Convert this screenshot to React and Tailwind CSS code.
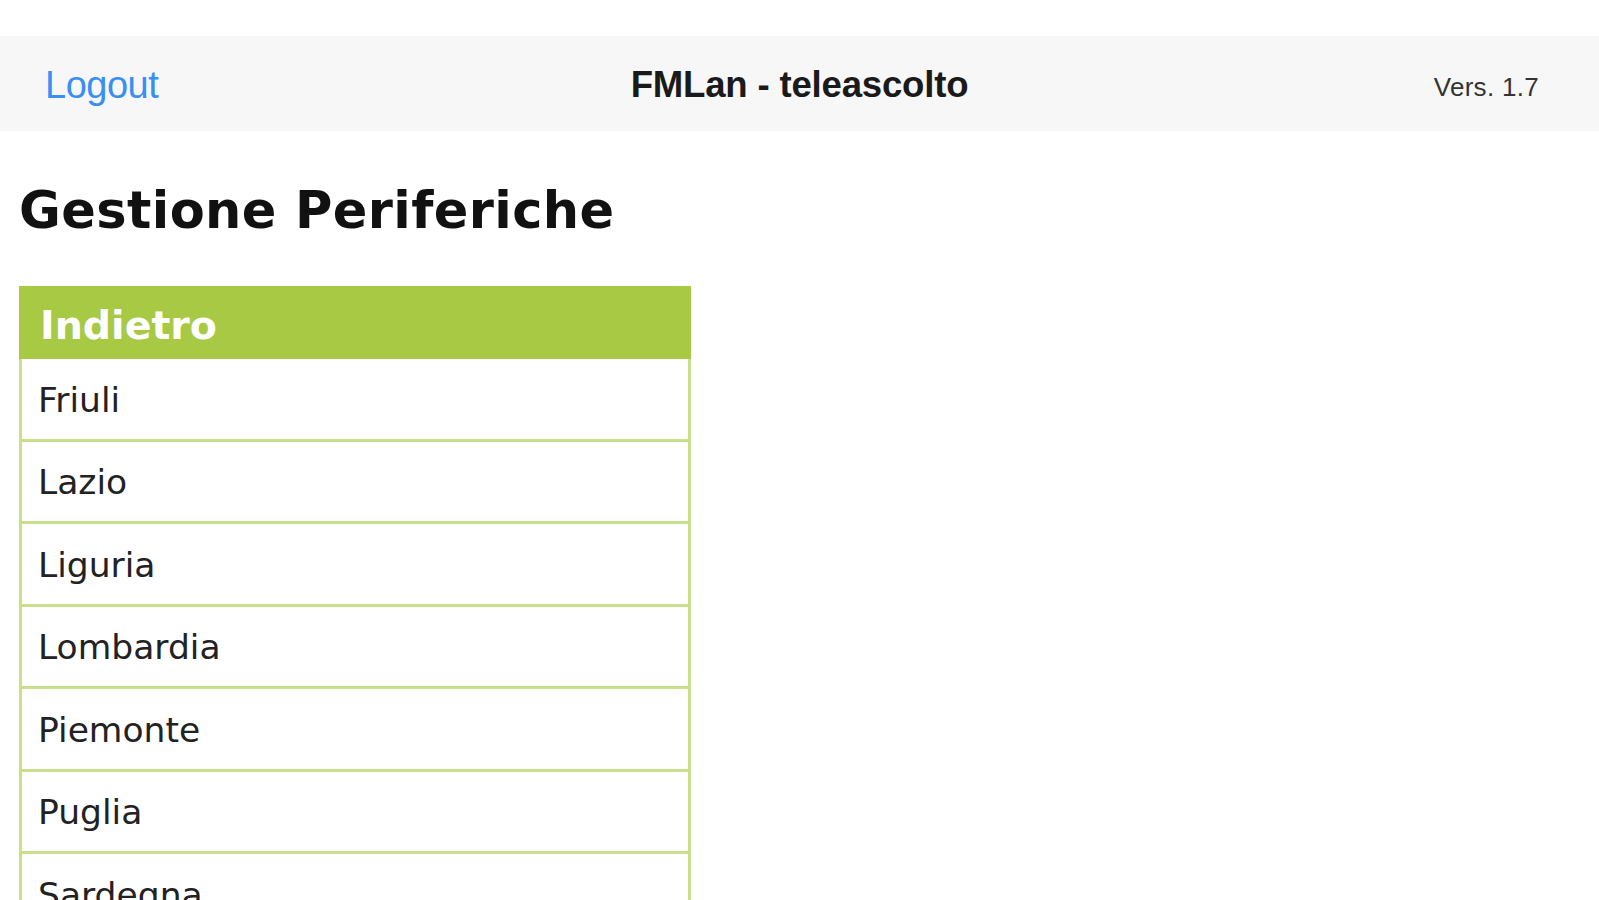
import React from "react";

const regions = ["Friuli", "Lazio", "Liguria", "Lombardia", "Piemonte", "Puglia", "Sardegna"];

export default function App() {
  return (
    <div className="min-h-screen bg-white pt-[36px]">
      <header className="h-[95px] bg-[#f7f7f7] grid grid-cols-3 items-center font-['Liberation_Sans',Arial,sans-serif]">
        <div className="pl-[45px] pt-[4px]">
          <a className="text-[38px] text-[#3a8ff2] tracking-[-0.5px]">Logout</a>
        </div>
        <div className="text-center text-[36.6px] font-bold text-[#1a1a1a] tracking-[-0.2px] pt-[4px]">FMLan - teleascolto</div>
        <div className="text-right pr-[60px] text-[26px] text-[#333] font-medium pt-[8px] tracking-[0.3px]">Vers. 1.7</div>
      </header>
      <main className="px-[19px] font-['DejaVu_Sans',Verdana,sans-serif]">
        <h1 className="mt-[50px] text-[51px] leading-[60px] font-bold text-[#111] tracking-[0.4px]">Gestione Periferiche</h1>
        <div className="mt-[45px] w-[672px] border-[3px] border-t-0 border-[#c8e08c]">
          <div className="h-[73px] bg-[#a8c944] -mx-[3px] px-[21px] pt-[7px] flex items-center text-white font-bold text-[39.5px]">Indietro</div>
          {regions.map((r) => (
            <div key={r} className="h-[82.5px] border-b-[3px] border-[#c8e08c] px-[16px] pt-[4px] flex items-center text-[34.5px] text-[#222]">
              {r}
            </div>
          ))}
        </div>
      </main>
    </div>
  );
}
